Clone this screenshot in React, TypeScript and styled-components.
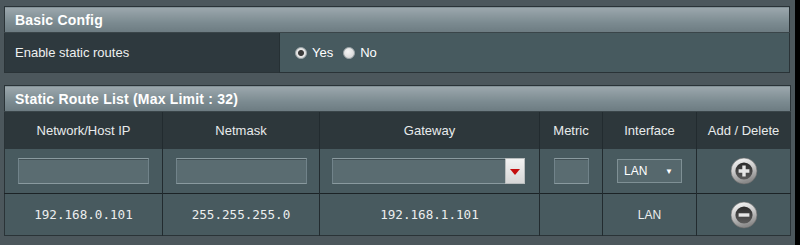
import styled, { createGlobalStyle } from 'styled-components'

const GlobalStyle = createGlobalStyle`
  html, body {
    margin: 0;
    padding: 0;
    background: #000;
  }
  body {
    font-family: "Liberation Sans", Arial, sans-serif;
  }
`

const Page = styled.div`
  width: 795px;
  height: 245px;
  box-sizing: border-box;
  padding: 6px 5px 0 4px;
  background: #4c575c;
  display: flex;
  flex-direction: column;
  gap: 12px;
`

const Table = styled.table`
  width: 786px;
  border-collapse: collapse;
  table-layout: fixed;
  border: 1px solid #2a3337;
`

const Title = styled.th`
  height: 26px;
  padding: 0 0 0 10px;
  box-sizing: border-box;
  text-align: left;
  font-size: 14px;
  font-weight: bold;
  color: #fff;
  letter-spacing: 0.2px;
  background: linear-gradient(to bottom, #9ca8ad 0%, #7c8b91 60%, #6c7b81 100%);
  border-bottom: 1px solid #3a4549;
`

const Label = styled.td`
  height: 39px;
  padding: 0 0 0 10px;
  background: #2e393e;
  color: #eef0f0;
  font-size: 13px;
  border-right: 1px solid #263034;
`

const Value = styled.td`
  padding: 0 0 0 15px;
  background: #475a5f;
  color: #fff;
  font-size: 13px;
`

const RadioGroup = styled.div`
  display: flex;
  align-items: center;
  gap: 4px;
`

const RadioOption = styled.label`
  display: flex;
  align-items: center;
  gap: 5px;
  margin-right: 6px;
`

const RadioDot = styled.span<{ $checked?: boolean }>`
  width: 12px;
  height: 12px;
  border-radius: 50%;
  box-sizing: border-box;
  background: ${({ $checked }) =>
    $checked
      ? 'radial-gradient(circle, #3b3b3b 0 2.5px, #e4e4e4 3.5px)'
      : 'radial-gradient(circle at 40% 35%, #f6f6f6, #cfcfcf)'};
  border: 1px solid #9aa3a6;
`

const HeadCell = styled.td`
  height: 35px;
  background: #2d373b;
  color: #e8ebec;
  font-size: 13px;
  text-align: center;
  border-right: 1px solid #222b2f;
  &:last-child {
    border-right: none;
  }
`

const Cell = styled.td<{ $mono?: boolean; $small?: boolean; $h: number }>`
  height: ${({ $h }) => $h}px;
  padding: 0;
  background: #485a5f;
  color: #eceeee;
  text-align: center;
  font-family: ${({ $mono }) =>
    $mono ? '"DejaVu Sans Mono", "Liberation Mono", monospace' : '"Liberation Sans", Arial, sans-serif'};
  font-size: ${({ $small, $mono }) => ($small ? '12px' : $mono ? '12.6px' : '13px')};
  border-right: 1px solid #222b2f;
  &:last-child {
    border-right: none;
  }
`

const DataRow = styled.tr`
  border-top: 1px solid #1c2326;
`

const Field = styled.div<{ $w: number }>`
  width: ${({ $w }) => $w}px;
  height: 26px;
  box-sizing: border-box;
  margin: 0 auto;
  background: #5a6c71;
  border: 1px solid #7f9196;
  border-color: #8a9a9f #71838a #8a9a9f #71838a;
  box-shadow: inset 0 1px 0 #435156;
`

const GatewaySelect = styled(Field)`
  position: relative;
  margin: 0 0 0 12px;
`

const DropButton = styled.span`
  position: absolute;
  right: -1px;
  top: -1px;
  width: 20px;
  height: 26px;
  box-sizing: border-box;
  background: linear-gradient(to bottom, #f2f2f2, #d6d6d6);
  border: 1px solid #b9bdbe;
  display: flex;
  align-items: center;
  justify-content: center;
  &::after {
    content: '';
    width: 0;
    height: 0;
    border-left: 5px solid transparent;
    border-right: 5px solid transparent;
    border-top: 6px solid #c40c0c;
    margin-top: 1px;
  }
`

const IfSelect = styled.div`
  width: 65px;
  height: 24px;
  box-sizing: border-box;
  margin: 0 auto;
  padding: 0 6px 0 6px;
  display: flex;
  align-items: center;
  justify-content: space-between;
  background: #56686d;
  border: 1px solid #7f9095;
  color: #fff;
  font-size: 12px;
`

const Caret = styled.span`
  font-size: 8px;
  margin-right: 2px;
`

const IconButton = styled.div`
  display: flex;
  justify-content: center;
  align-items: center;
`

const RoundIcon = ({ type }: { type: 'add' | 'del' }) => (
  <svg width="28" height="28" viewBox="0 0 28 28">
    <defs>
      <linearGradient id={`ring-${type}`} x1="0" y1="0" x2="0.3" y2="1">
        <stop offset="0" stopColor="#fcfcfc" />
        <stop offset="0.5" stopColor="#cdcdcd" />
        <stop offset="1" stopColor="#8a8a8a" />
      </linearGradient>
      <linearGradient id={`core-${type}`} x1="0" y1="0" x2="0" y2="1">
        <stop offset="0" stopColor="#2a2a2a" />
        <stop offset="1" stopColor="#5c5c5c" />
      </linearGradient>
    </defs>
    <circle cx="14" cy="14" r="13" fill={`url(#ring-${type})`} stroke="#666" strokeWidth="0.6" />
    <circle cx="14" cy="14" r="8.6" fill={`url(#core-${type})`} />
    {type === 'add' ? (
      <path d="M14 8.6 V19.4 M8.6 14 H19.4" stroke="#e6e6e6" strokeWidth="3.4" />
    ) : (
      <path d="M8.6 14 H19.4" stroke="#e6e6e6" strokeWidth="3.4" />
    )}
  </svg>
)

const columns = [158, 157, 220, 63, 94, 94]

const App = () => (
  <>
    <GlobalStyle />
    <Page>
      <Table>
        <colgroup>
          <col style={{ width: 275 }} />
          <col />
        </colgroup>
        <thead>
          <tr>
            <Title colSpan={2}>Basic Config</Title>
          </tr>
        </thead>
        <tbody>
          <tr>
            <Label>Enable static routes</Label>
            <Value>
              <RadioGroup>
                <RadioOption>
                  <RadioDot $checked />
                  Yes
                </RadioOption>
                <RadioOption>
                  <RadioDot />
                  No
                </RadioOption>
              </RadioGroup>
            </Value>
          </tr>
        </tbody>
      </Table>

      <Table>
        <colgroup>
          {columns.map((w, i) => (
            <col key={i} style={{ width: w }} />
          ))}
        </colgroup>
        <thead>
          <tr>
            <Title colSpan={6}>Static Route List (Max Limit : 32)</Title>
          </tr>
        </thead>
        <tbody>
          <tr>
            <HeadCell>Network/Host IP</HeadCell>
            <HeadCell>Netmask</HeadCell>
            <HeadCell>Gateway</HeadCell>
            <HeadCell>Metric</HeadCell>
            <HeadCell>Interface</HeadCell>
            <HeadCell>Add / Delete</HeadCell>
          </tr>
          <tr>
            <Cell $h={44}>
              <Field $w={131} />
            </Cell>
            <Cell $h={44}>
              <Field $w={131} />
            </Cell>
            <Cell $h={44}>
              <GatewaySelect $w={193}>
                <DropButton />
              </GatewaySelect>
            </Cell>
            <Cell $h={44}>
              <Field $w={35} />
            </Cell>
            <Cell $h={44}>
              <IfSelect>
                LAN
                <Caret>▼</Caret>
              </IfSelect>
            </Cell>
            <Cell $h={44}>
              <IconButton>
                <RoundIcon type="add" />
              </IconButton>
            </Cell>
          </tr>
          <DataRow>
            <Cell $h={41} $mono>192.168.0.101</Cell>
            <Cell $h={41} $mono>255.255.255.0</Cell>
            <Cell $h={41} $mono>192.168.1.101</Cell>
            <Cell $h={41} />
            <Cell $h={41} $small>LAN</Cell>
            <Cell $h={41}>
              <IconButton>
                <RoundIcon type="del" />
              </IconButton>
            </Cell>
          </DataRow>
        </tbody>
      </Table>
    </Page>
  </>
)

export default App
